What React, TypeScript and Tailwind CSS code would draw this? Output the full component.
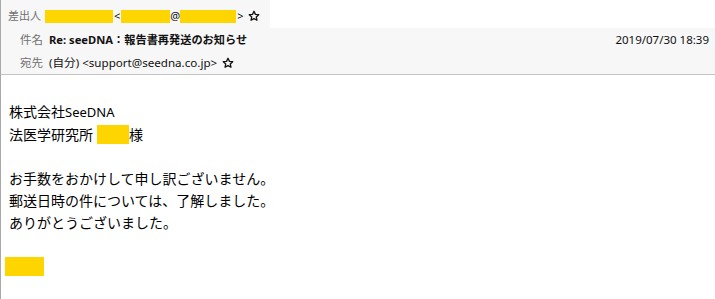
import React from 'react';

const Star = () => (
  <svg viewBox="0 0 24 24" className="w-[12px] h-[12px] ml-[5px] shrink-0" fill="none" stroke="#111" strokeWidth="2.6" strokeLinejoin="round">
    <path d="M12 2.5l2.9 6.2 6.6.7-5 4.5 1.4 6.6L12 17.2l-5.9 3.3 1.4-6.6-5-4.5 6.6-.7z" />
  </svg>
);

const Redacted = ({ w, h = 14 }: { w: number; h?: number }) => (
  <span className="inline-block bg-[#ffd500] align-middle" style={{ width: w, height: h }} />
);

export default function App() {
  return (
    <div className="w-[715px] h-[299px] bg-white border-l border-[#a9a9a9] overflow-hidden font-['Noto_Sans','Noto_Sans_CJK_JP',sans-serif] text-[11px] text-[#111]">
      {/* header */}
      <div className="border-b border-[#c4c4c4]">
        <div className="flex">
          <div className="w-[269px] h-[28px] pt-[4px] bg-[#f7f7f7] flex items-center pl-[7px]">
            <span className="text-[#707070] mr-[4px] text-[11px]">差出人</span>
            <Redacted w={68} h={13} />
            <span className="mx-[1px]">&lt;</span>
            <Redacted w={49} h={13} />
            <span>@</span>
            <Redacted w={56} h={13} />
            <span className="ml-[1px]">&gt;</span>
            <Star />
          </div>
        </div>
        <div className="bg-[#f7f7f7]">
          <div className="h-[24px] flex items-center pl-[19px] pr-[6px]">
            <span className="text-[#707070] mr-[6px] text-[11.5px]">件名</span>
            <span className="font-bold text-[11.2px]">Re: seeDNA：報告書再発送のお知らせ</span>
            <span className="ml-auto text-[11.5px]">2019/07/30 18:39</span>
          </div>
          <div className="h-[22px] flex items-center pl-[19px] pb-[1px]">
            <span className="text-[#707070] mr-[6px] text-[11.5px]">宛先</span>
            <span className="text-[11.6px]">(自分) &lt;support@seedna.co.jp&gt;</span>
            <Star />
          </div>
        </div>
      </div>

      {/* body */}
      <div className="pt-[25px] pl-[8px] text-[14px] leading-[22px] text-[#000] font-['Noto_Sans_CJK_JP',sans-serif]">
        <div>
          株式会社<span className="font-['Noto_Sans',sans-serif] text-[13px]">SeeDNA</span>
        </div>
        <div className="flex items-center">
          <span>法医学研究所</span>
          <span className="inline-block w-[32px] h-[19px] bg-[#ffd500] ml-[4px]" />
          <span>様</span>
        </div>
        <div className="h-[22px]" />
        <div>お手数をおかけして申し訳ございません。</div>
        <div>郵送日時の件については、了解しました。</div>
        <div>ありがとうございました。</div>
        <div className="h-[22px]" />
        <div className="h-[22px] flex items-center -ml-[4px]">
          <span className="inline-block w-[39px] h-[19px] bg-[#ffd500]" />
        </div>
      </div>
    </div>
  );
}
